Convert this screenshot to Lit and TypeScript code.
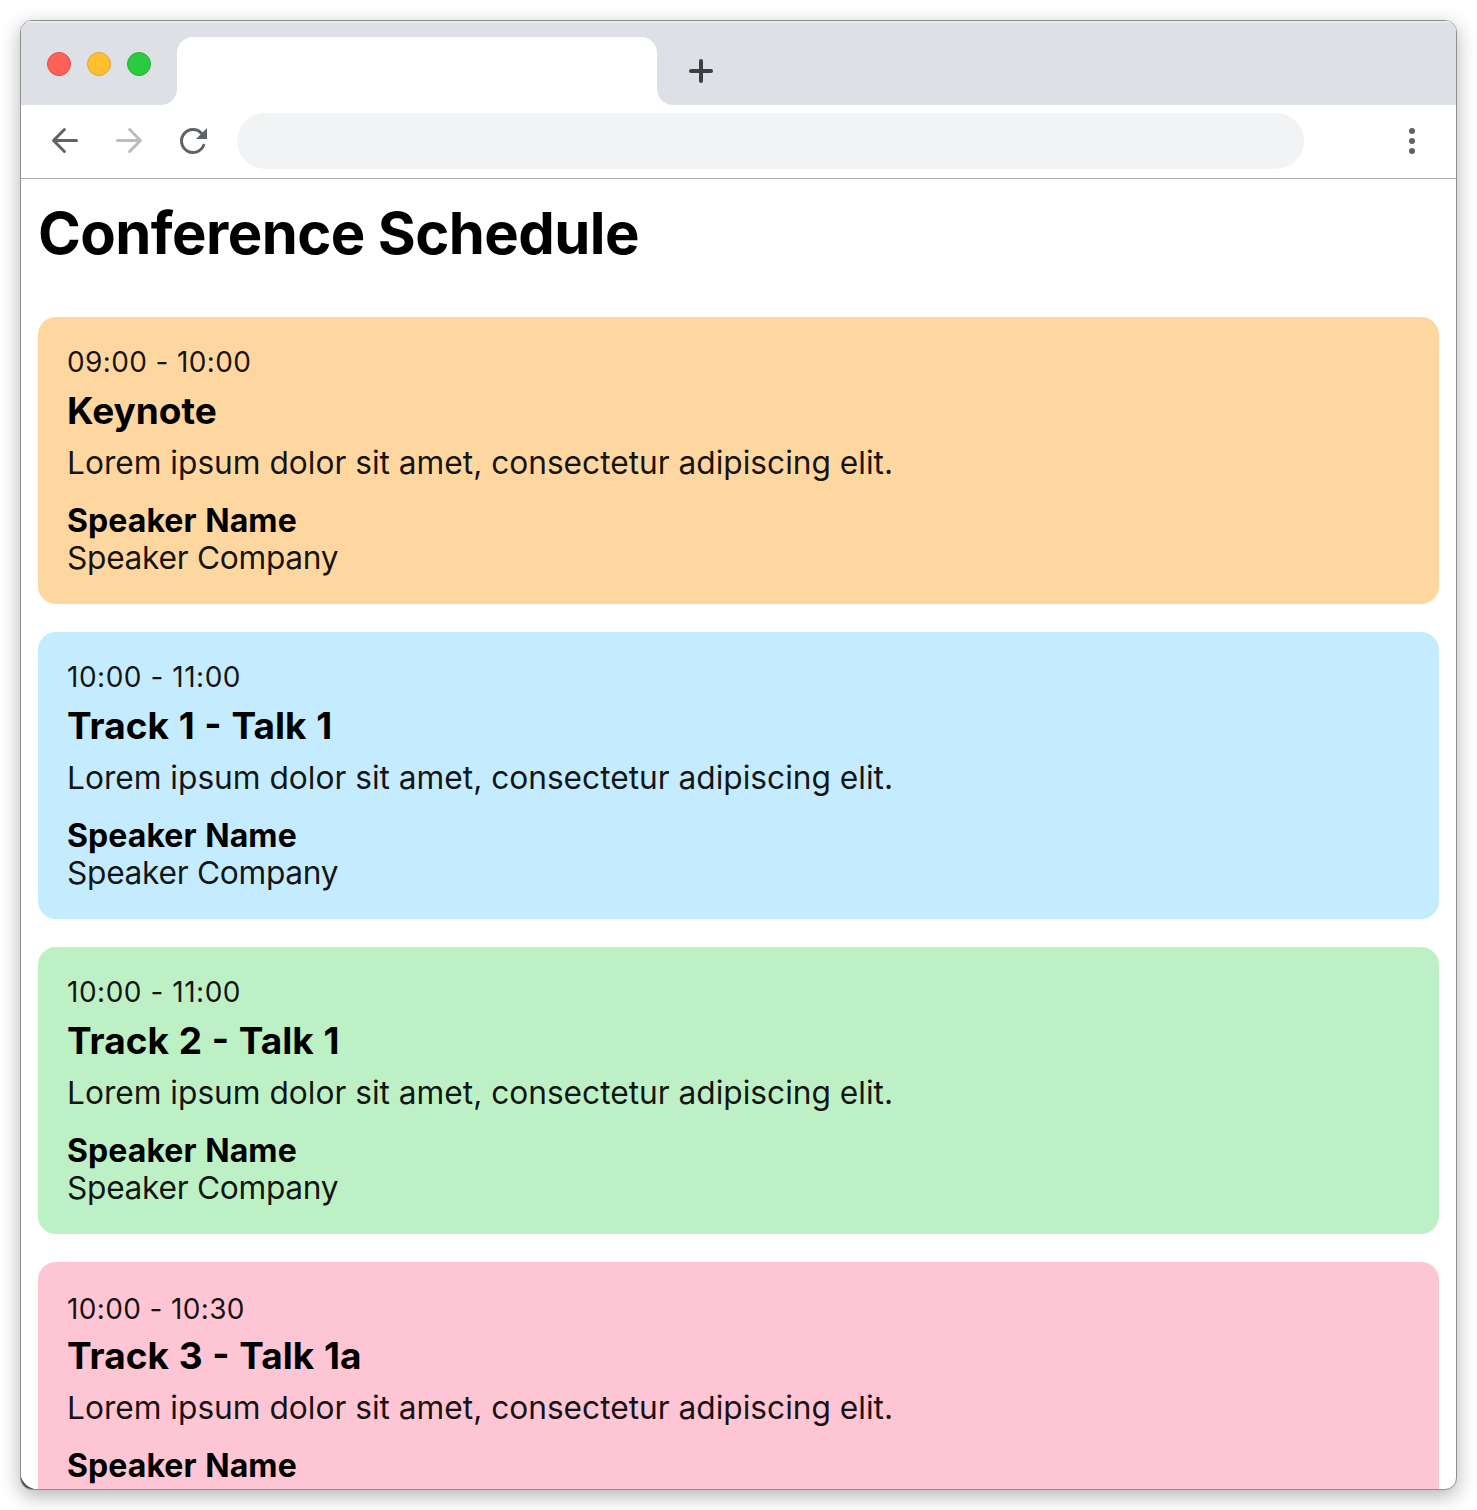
import { LitElement, html, css, nothing } from "lit";
import { customElement } from "lit/decorators.js";

interface Session {
  time: string;
  title: string;
  tone: string;
  company?: string;
}

const SESSIONS: Session[] = [
  { time: "09:00 - 10:00", title: "Keynote", tone: "orange", company: "Speaker Company" },
  { time: "10:00 - 11:00", title: "Track 1 - Talk 1", tone: "blue", company: "Speaker Company" },
  { time: "10:00 - 11:00", title: "Track 2 - Talk 1", tone: "green", company: "Speaker Company" },
  { time: "10:00 - 10:30", title: "Track 3 - Talk 1a", tone: "pink" },
];

@customElement("app-root")
export class AppRoot extends LitElement {
  static styles = css`
    :host { display: block; width: 1477px; height: 1510px; box-sizing: border-box; padding: 20px; overflow: hidden; background: #fff; font-family: Inter, "Liberation Sans", sans-serif; color: #000; }
    .window { position: relative; box-sizing: border-box; width: 1437px; height: 1470px; border: 1px solid #8f8f8f; border-radius: 12px; overflow: hidden; display: flex; flex-direction: column; background: #fff; box-shadow: 0 6px 20px rgba(0,0,0,.3); }
    .tabs { flex: none; height: 84px; display: flex; background: #fff; }
    .left { box-sizing: border-box; width: 156px; background: #dde0e5; border-bottom-right-radius: 16px; display: flex; gap: 16px; padding: 31px 0 0 26px; box-shadow: inset 0 2px 0 #e9ebee; }
    .dot { box-sizing: border-box; width: 24px; height: 24px; border-radius: 50%; border: 1px solid; }
    .red { background: #ff6159; border-color: #e24b41; }
    .amber { background: #ffbf2f; border-color: #e1a032; }
    .lime { background: #29cc41; border-color: #2dac2f; }
    .tab-slot { width: 480px; background: #dde0e5; padding-top: 16px; box-sizing: border-box; box-shadow: inset 0 2px 0 #e9ebee; }
    .tab { height: 68px; background: #fff; border-radius: 16px 16px 0 0; }
    .right { flex: 1; box-sizing: border-box; background: #dde0e5; border-bottom-left-radius: 16px; padding: 37px 0 0 31px; box-shadow: inset 0 2px 0 #e9ebee; }
    svg { display: block; flex: none; }
    .bar { flex: none; box-sizing: border-box; height: 74px; border-bottom: 1px solid #afafaf; display: flex; align-items: center; padding: 0 27px 1px 27px; }
    .back { margin-right: 32px; }
    .fwd { margin-right: 32px; }
    .reload { margin-right: 29px; }
    .address { flex: none; width: 1067px; height: 56px; border-radius: 28px; background: #f1f3f4; margin-right: 100px; }
    .page { flex: 1; min-height: 0; overflow: hidden; padding: 19px 17px 0; display: flex; flex-direction: column; }
    h1 { margin: 0; font-size: 58px; line-height: 70px; font-weight: 700; letter-spacing: -0.58px; white-space: nowrap; height: 119px; flex: none; }
    .list { display: flex; flex-direction: column; gap: 28px; }
    .card { flex: none; box-sizing: border-box; height: 287px; border-radius: 18px; padding: 29px 29px 0; display: flex; flex-direction: column; white-space: nowrap; }
    .orange { background: #fed7a0; }
    .blue { background: #c5ebfe; }
    .green { background: #bef0c5; }
    .pink { background: #fec5d4; }
    .time { font-size: 28px; line-height: 32px; letter-spacing: .36px; color: rgba(0,0,0,.92); }
    .blue .time, .green .time { letter-spacing: .52px; }
    .pink .time { padding-top: 2px; margin-bottom: -2px; }
    .title { font-size: 37px; line-height: 44px; font-weight: 700; margin-top: 11px; word-spacing: 1px; }
    .text { font-size: 31.7px; line-height: 38px; margin-top: 11px; letter-spacing: -0.02px; color: rgba(0,0,0,.92); }
    .name { font-size: 32px; line-height: 38px; margin-top: 20px; font-weight: 700; letter-spacing: .08px; word-spacing: 1px; }
    .company { font-size: 31.7px; line-height: 38px; margin-top: -1px; letter-spacing: -0.3px; color: rgba(0,0,0,.92); }
    .corner { position: absolute; left: 0; bottom: 0; }
  `;

  render() {
    return html`
      <div class="window">
        <div class="tabs">
          <div class="left"><i class="dot red"></i><i class="dot amber"></i><i class="dot lime"></i></div>
          <div class="tab-slot"><div class="tab"></div></div>
          <div class="right">
            <svg width="26" height="26" viewBox="0 0 26 26"><path d="M13 3v20M3 13h20" stroke="#3d4043" stroke-width="4" stroke-linecap="round" /></svg>
          </div>
        </div>
        <div class="bar">
          <svg class="back" width="32" height="32" viewBox="0 0 32 32" fill="none" stroke="#5f6368" stroke-width="3" stroke-linecap="round" stroke-linejoin="round"><path d="M28.500 15.500H6M16.400 4.500L5.500 15.500l10.900 11" /></svg>
          <svg class="fwd" width="32" height="32" viewBox="0 0 32 32" fill="none" stroke="#babcbe" stroke-width="3" stroke-linecap="round" stroke-linejoin="round"><path d="M5.500 15.500H28M17.600 4.500l10.900 11-10.900 11" /></svg>
          <svg class="reload" width="32" height="32" viewBox="0 0 32 32"><path d="M27.700 20.300A11.500 11.500 0 1 1 25.600 8.400" fill="none" stroke="#5f6368" stroke-width="3" stroke-linecap="round" /><path d="M31 3v11H20z" fill="#5f6368" /></svg>
          <div class="address"></div>
          <svg width="16" height="32" viewBox="0 0 16 32" fill="#5f6368"><circle cx="8" cy="6" r="3" /><circle cx="8" cy="16" r="3" /><circle cx="8" cy="26" r="3" /></svg>
        </div>
        <div class="page">
          <h1>Conference Schedule</h1>
          <div class="list">
            ${SESSIONS.map((s) => html`
              <div class="card ${s.tone}">
                <div class="time">${s.time}</div>
                <div class="title">${s.title}</div>
                <div class="text">Lorem ipsum dolor sit amet, consectetur adipiscing elit.</div>
                <div class="name">Speaker Name</div>
                ${s.company ? html`<div class="company">${s.company}</div>` : nothing}
              </div>`)}
          </div>
        </div>
        <svg class="corner" width="14" height="14" viewBox="0 0 14 14"><path d="M0 2Q3 11 13 14H0z" fill="#4a4a4a" /></svg>
      </div>`;
  }
}
